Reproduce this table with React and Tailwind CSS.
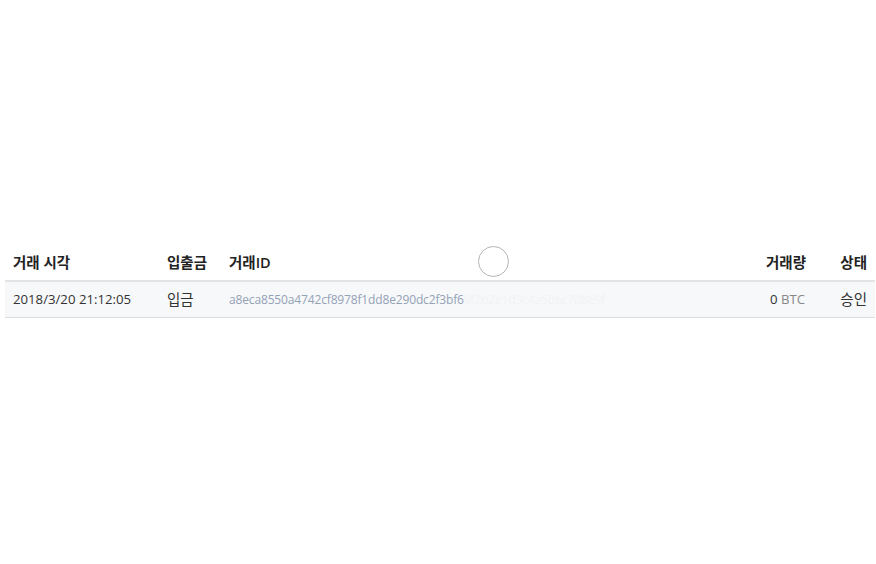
export default function App() {
  const font = { fontFamily: '"Open Sans", "Noto Sans CJK KR", sans-serif' };
  return (
    <div className="w-[876px] h-[564px] bg-white relative" style={font}>
      <div className="pt-[245px] pl-[5px] w-[875px]">
        <div className="flex items-center h-[37px] border-b-2 border-[#e2e3e5] text-[14.5px] font-semibold text-[#222]">
          <div className="w-[162px] pl-[8px]">거래 시각</div>
          <div className="w-[62px]">입출금</div>
          <div className="flex-1">거래ID</div>
          <div className="w-[80px] text-right">거래량</div>
          <div className="w-[69px] text-right pr-[8px]">상태</div>
        </div>
        <div className="flex items-center h-[36px] bg-[#f7f8fa] border-b border-[#dcdde0] text-[13.2px] text-[#333]">
          <div className="w-[162px] pl-[8px]">2018/3/20 21:12:05</div>
          <div className="w-[62px] text-[14.5px]">입금</div>
          <div className="flex-1 text-[12px] text-[#94a2b6] tracking-[-0.15px]">
            a8eca8550a4742cf8978f1dd8e290dc2f3bf6
            <span className="text-[#f1f3f5]">9f2b2e1d3c4a5b6c7d8e9f</span>
          </div>
          <div className="w-[80px] text-right pr-[1px]">
            0 <span className="text-[#888]">BTC</span>
          </div>
          <div className="w-[69px] text-right pr-[8px] text-[14.5px]">승인</div>
        </div>
      </div>
      <div className="absolute left-[478px] top-[246px] w-[31px] h-[31px] rounded-full border border-[#b5b5b8]"></div>
    </div>
  );
}
